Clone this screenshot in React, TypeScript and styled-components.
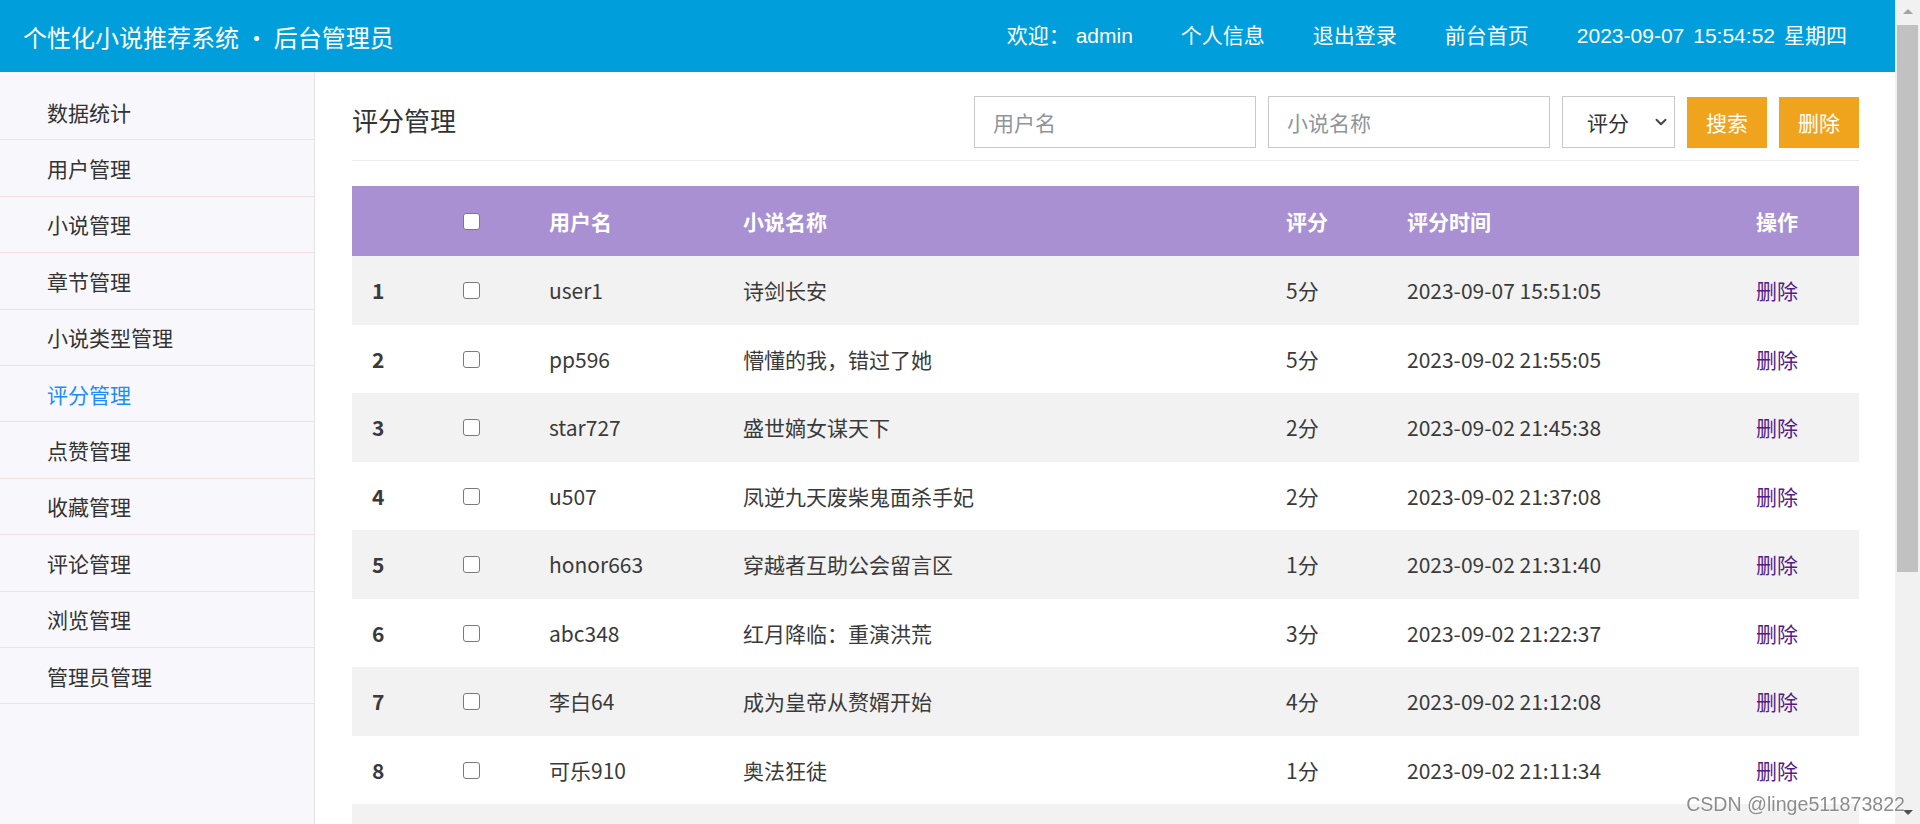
import React from "react";
import styled, { createGlobalStyle } from "styled-components";
import { ChevronDown } from "lucide-react";

const GlobalStyle = createGlobalStyle`
  html, body { margin: 0; padding: 0; height: 100%; overflow: hidden; }
  body { font-family: "Noto Sans CJK SC", "Noto Sans", sans-serif; color: #333; background: #fff; }
  #root { height: 100%; }
  * { box-sizing: border-box; }
`;

const Frame = styled.div`
  display: flex;
  height: 100vh;
`;

const Page = styled.div`
  flex: 1;
  min-width: 0;
  overflow: hidden;
`;

const ScrollBar = styled.div`
  width: 25px;
  flex-shrink: 0;
  background: #f1f1f1;
  display: flex;
  flex-direction: column;
`;

const ScrollButton = styled.div`
  height: 24px;
  flex-shrink: 0;
  display: flex;
  align-items: center;
  justify-content: center;
`;

const Arrow = styled.span<{ $down?: boolean }>`
  width: 0;
  height: 0;
  border-left: 5px solid transparent;
  border-right: 5px solid transparent;
  ${(p) =>
    p.$down
      ? "border-top: 5px solid #505050; margin-top: 0px;"
      : "border-bottom: 5px solid #a3a3a3; margin-top: -2px;"}
`;

const Thumb = styled.div`
  height: 547px;
  margin: 1px 2px 0;
  background: #c1c1c1;
`;

const Track = styled.div`
  flex: 1;
`;

const TopBar = styled.header`
  height: 72px;
  background: #019edc;
  color: #fff;
  display: flex;
  align-items: center;
  justify-content: space-between;
  padding: 0 48px 0 23px;
`;

const Brand = styled.div`
  font-size: 24px;
  white-space: pre;
`;

const NavLinks = styled.nav`
  display: flex;
  align-items: baseline;
  gap: 48px;
  font-family: "Liberation Sans", "Noto Sans CJK SC", sans-serif;
  font-size: 21px;
  line-height: 30px;
`;

const NavItem = styled.span`
  color: #fff;
  white-space: pre;
`;

const ClockPart = styled.span`
  margin-left: 9px;
  &:first-child { margin-left: 0; }
`;

const Layout = styled.div`
  display: flex;
  align-items: stretch;
  min-height: calc(100vh - 72px);
`;

const Sidebar = styled.aside`
  width: 315px;
  flex-shrink: 0;
  background: #f8f8fc;
  border-right: 1px solid #e4e4e8;
  padding-top: 12px;
`;

const MenuItem = styled.div<{ $active?: boolean }>`
  height: 56.4px;
  display: flex;
  align-items: center;
  padding-left: 47px;
  font-size: 21px;
  color: ${(p) => (p.$active ? "#1a8cff" : "#333")};
  border-bottom: 1px solid #f6dfe3;
`;

const Main = styled.main`
  flex: 1;
  min-width: 0;
  padding: 24px 36px 156px 37px;
`;

const TitleRow = styled.div`
  display: flex;
  align-items: center;
  justify-content: space-between;
  padding-bottom: 12px;
  border-bottom: 1px solid #ebebeb;
`;

const PageTitle = styled.h2`
  margin: 0 0 6px;
  font-size: 26px;
  font-weight: 400;
  color: #333;
`;

const SearchForm = styled.div`
  display: flex;
  align-items: center;
  gap: 12px;
`;

const TextInput = styled.input`
  width: 282px;
  height: 52px;
  border: 1px solid #c9c9cc;
  padding: 0 18px;
  font-family: inherit;
  font-size: 21px;
  color: #333;
  outline: none;
  &::placeholder { color: #8f959b; }
`;

const SelectWrap = styled.div`
  position: relative;
  width: 113px;
  height: 52px;
`;

const Select = styled.select`
  appearance: none;
  width: 100%;
  height: 100%;
  border: 1px solid #c9c9cc;
  background: #fff;
  padding: 0 0 0 24px;
  font-family: inherit;
  font-size: 21px;
  color: #333;
  outline: none;
`;

const SelectArrow = styled(ChevronDown)`
  position: absolute;
  right: 5px;
  top: 17px;
  pointer-events: none;
  color: #444;
`;

const ActionButton = styled.button`
  width: 80px;
  height: 51px;
  border: 0;
  background: #f0a41e;
  color: #fff;
  font-family: inherit;
  font-size: 21px;
  padding: 0;
  cursor: pointer;
`;

const Table = styled.table`
  width: 100%;
  margin-top: 25px;
  border-collapse: collapse;
  table-layout: fixed;
`;

const HeadRow = styled.tr`
  height: 70px;
  background: #a990d2;
`;

const Th = styled.th`
  padding: 0 0 0 20px;
  text-align: left;
  color: #fff;
  font-size: 21px;
  font-weight: 700;
`;

const Row = styled.tr<{ $odd: boolean }>`
  height: 68.5px;
  background: ${(p) => (p.$odd ? "#f2f2f2" : "#fff")};
`;

const Td = styled.td<{ $bold?: boolean }>`
  padding: 0 0 0 20px;
  font-size: 21px;
  color: #3a3a3a;
  font-weight: ${(p) => (p.$bold ? 700 : 400)};
  white-space: nowrap;
`;

const Check = styled.input`
  appearance: none;
  width: 17px;
  height: 17px;
  margin: 0;
  border: 1.5px solid #7a7a7a;
  border-radius: 3px;
  background: #fff;
  vertical-align: middle;
  position: relative;
  top: -3px;
`;

const DeleteLink = styled.a`
  color: #551a8b;
  text-decoration: none;
  cursor: pointer;
`;

const Pager = styled.div`
  margin-top: 30px;
  height: 40px;
  display: flex;
  align-items: center;
  justify-content: center;
  gap: 10px;
  font-size: 18px;
  color: #555;
`;

const PageBtn = styled.span<{ $active?: boolean }>`
  padding: 6px 14px;
  border: 1px solid #ddd;
  background: ${(p) => (p.$active ? "#a990d2" : "#fff")};
  color: ${(p) => (p.$active ? "#fff" : "#555")};
`;

const Watermark = styled.div`
  position: fixed;
  right: 15px;
  bottom: 8px;
  font-family: "Liberation Sans", Arial, sans-serif;
  font-size: 19.6px;
  color: #8c8c8c;
  text-shadow: 0 0 2px #fff, 0 0 1px #fff;
  pointer-events: none;
  white-space: pre;
`;

const menu = [
  "数据统计",
  "用户管理",
  "小说管理",
  "章节管理",
  "小说类型管理",
  "评分管理",
  "点赞管理",
  "收藏管理",
  "评论管理",
  "浏览管理",
  "管理员管理",
];

const rows = [
  ["user1", "诗剑长安", "5分", "2023-09-07 15:51:05"],
  ["pp596", "懵懂的我，错过了她", "5分", "2023-09-02 21:55:05"],
  ["star727", "盛世嫡女谋天下", "2分", "2023-09-02 21:45:38"],
  ["u507", "凤逆九天废柴鬼面杀手妃", "2分", "2023-09-02 21:37:08"],
  ["honor663", "穿越者互助公会留言区", "1分", "2023-09-02 21:31:40"],
  ["abc348", "红月降临：重演洪荒", "3分", "2023-09-02 21:22:37"],
  ["李白64", "成为皇帝从赘婿开始", "4分", "2023-09-02 21:12:08"],
  ["可乐910", "奥法狂徒", "1分", "2023-09-02 21:11:34"],
  ["夏天812", "重生之都市修仙", "3分", "2023-09-02 21:05:17"],
  ["momo205", "全职高手", "5分", "2023-09-02 20:58:43"],
];

const colWidths = [91, 86, 194, 543, 121, 349, 123];

export default function App() {
  return (
    <>
      <GlobalStyle />
      <Frame>
        <Page>
          <TopBar>
            <Brand>个性化小说推荐系统 · 后台管理员</Brand>
            <NavLinks>
              <NavItem>欢迎： admin</NavItem>
              <NavItem>个人信息</NavItem>
              <NavItem>退出登录</NavItem>
              <NavItem>前台首页</NavItem>
              <NavItem>
                <ClockPart>2023-09-07</ClockPart>
                <ClockPart>15:54:52</ClockPart>
                <ClockPart>星期四</ClockPart>
              </NavItem>
            </NavLinks>
          </TopBar>
          <Layout>
            <Sidebar>
              {menu.map((m) => (
                <MenuItem key={m} $active={m === "评分管理"}>
                  {m}
                </MenuItem>
              ))}
            </Sidebar>
            <Main>
              <TitleRow>
                <PageTitle>评分管理</PageTitle>
                <SearchForm>
                  <TextInput placeholder="用户名" />
                  <TextInput placeholder="小说名称" />
                  <SelectWrap>
                    <Select defaultValue="">
                      <option value="">评分</option>
                      <option value="1">1分</option>
                      <option value="2">2分</option>
                      <option value="3">3分</option>
                      <option value="4">4分</option>
                      <option value="5">5分</option>
                    </Select>
                    <SelectArrow size={18} strokeWidth={2.5} />
                  </SelectWrap>
                  <ActionButton>搜索</ActionButton>
                  <ActionButton>删除</ActionButton>
                </SearchForm>
              </TitleRow>
              <Table>
                <colgroup>
                  {colWidths.map((w, i) => (
                    <col key={i} style={{ width: w }} />
                  ))}
                </colgroup>
                <thead>
                  <HeadRow>
                    <Th></Th>
                    <Th>
                      <Check type="checkbox" />
                    </Th>
                    <Th>用户名</Th>
                    <Th>小说名称</Th>
                    <Th>评分</Th>
                    <Th>评分时间</Th>
                    <Th>操作</Th>
                  </HeadRow>
                </thead>
                <tbody>
                  {rows.map((r, i) => (
                    <Row key={i} $odd={i % 2 === 0}>
                      <Td $bold>{i + 1}</Td>
                      <Td>
                        <Check type="checkbox" />
                      </Td>
                      <Td>{r[0]}</Td>
                      <Td>{r[1]}</Td>
                      <Td>{r[2]}</Td>
                      <Td>{r[3]}</Td>
                      <Td>
                        <DeleteLink>删除</DeleteLink>
                      </Td>
                    </Row>
                  ))}
                </tbody>
              </Table>
              <Pager>
                <PageBtn>上一页</PageBtn>
                <PageBtn $active>1</PageBtn>
                <PageBtn>2</PageBtn>
                <PageBtn>3</PageBtn>
                <PageBtn>下一页</PageBtn>
              </Pager>
            </Main>
          </Layout>
        </Page>
        <ScrollBar>
          <ScrollButton>
            <Arrow />
          </ScrollButton>
          <Thumb />
          <Track />
          <ScrollButton>
            <Arrow $down />
          </ScrollButton>
        </ScrollBar>
      </Frame>
      <Watermark>CSDN @linge511873822</Watermark>
    </>
  );
}
